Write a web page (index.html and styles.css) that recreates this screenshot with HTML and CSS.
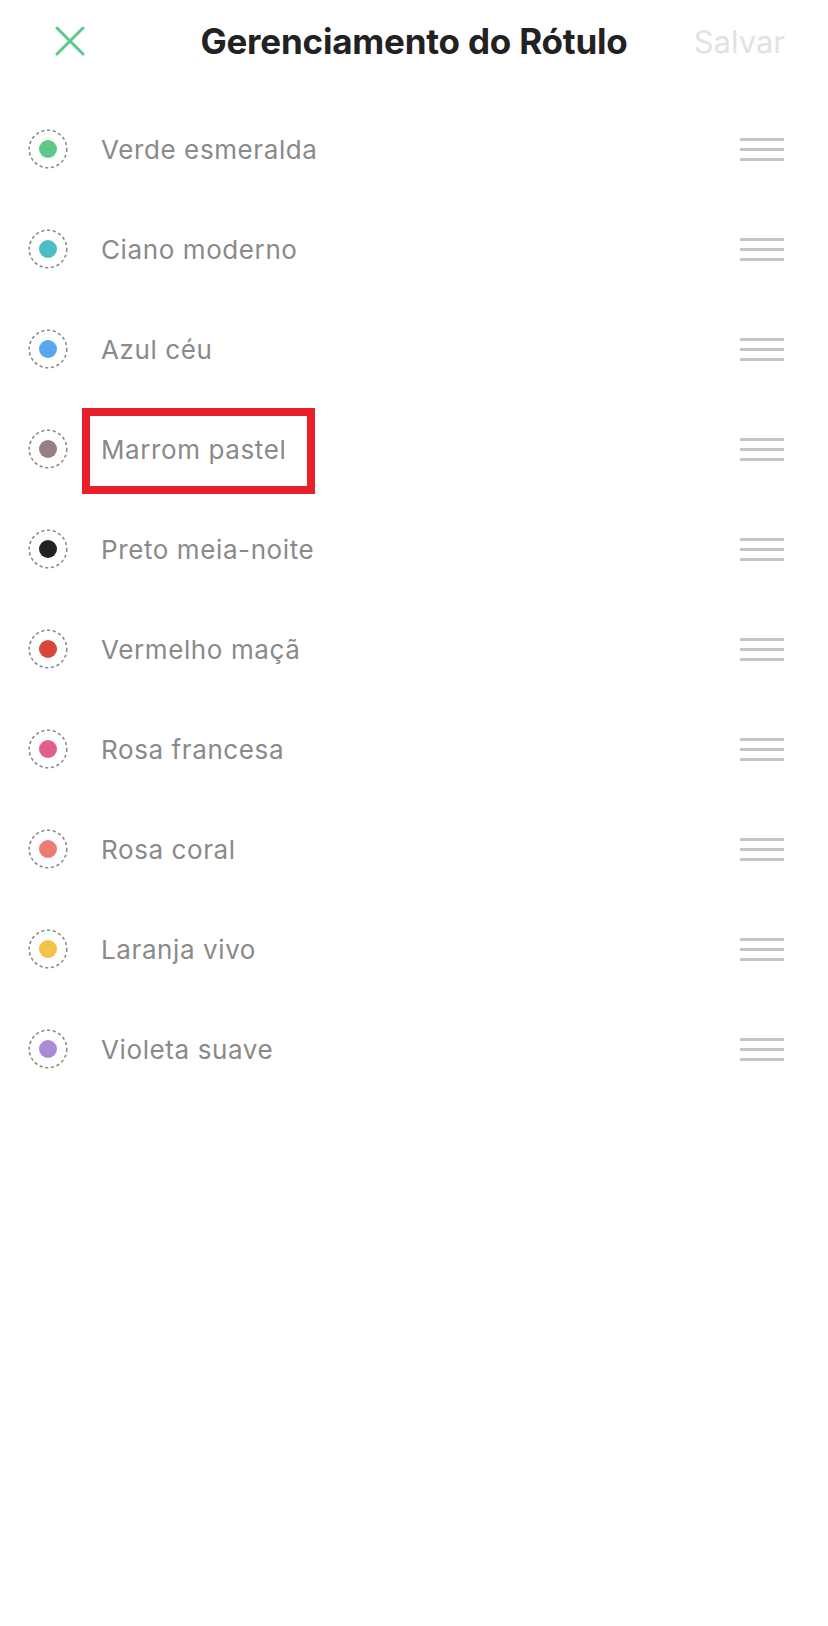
FILE: index.html
```html
<!DOCTYPE html>
<html lang="pt">
<head>
<meta charset="utf-8">
<title>Gerenciamento do Rótulo</title>
<link rel="stylesheet" href="styles.css">
</head>
<body>
<div class="screen">
  <header class="topbar">
    <div class="close">
      <svg width="30" height="30" viewBox="0 0 30 30"><path d="M2 2 L28 28 M28 2 L2 28" stroke="#5cc98a" stroke-width="3" stroke-linecap="round" fill="none"/></svg>
    </div>
    <h1 class="title">Gerenciamento do Rótulo</h1>
    <div class="save">Salvar</div>
  </header>
  <ul class="labels">
    <li class="row"><span class="swatch"><svg width="40" height="40" viewBox="0 0 40 40"><circle cx="20" cy="20" r="18.8" class="ring"/><circle cx="20" cy="20" r="9" fill="#5cc98a"/></svg></span><span class="name">Verde esmeralda</span><span class="grip"><i></i><i></i><i></i></span></li>
    <li class="row"><span class="swatch"><svg width="40" height="40" viewBox="0 0 40 40"><circle cx="20" cy="20" r="18.8" class="ring"/><circle cx="20" cy="20" r="9" fill="#4dbcc4"/></svg></span><span class="name">Ciano moderno</span><span class="grip"><i></i><i></i><i></i></span></li>
    <li class="row"><span class="swatch"><svg width="40" height="40" viewBox="0 0 40 40"><circle cx="20" cy="20" r="18.8" class="ring"/><circle cx="20" cy="20" r="9" fill="#58a6ef"/></svg></span><span class="name">Azul céu</span><span class="grip"><i></i><i></i><i></i></span></li>
    <li class="row"><span class="swatch"><svg width="40" height="40" viewBox="0 0 40 40"><circle cx="20" cy="20" r="18.8" class="ring"/><circle cx="20" cy="20" r="9" fill="#977f7f"/></svg></span><span class="name">Marrom pastel</span><span class="grip"><i></i><i></i><i></i></span><span class="highlight"></span></li>
    <li class="row"><span class="swatch"><svg width="40" height="40" viewBox="0 0 40 40"><circle cx="20" cy="20" r="18.8" class="ring"/><circle cx="20" cy="20" r="9" fill="#222222"/></svg></span><span class="name">Preto meia-noite</span><span class="grip"><i></i><i></i><i></i></span></li>
    <li class="row"><span class="swatch"><svg width="40" height="40" viewBox="0 0 40 40"><circle cx="20" cy="20" r="18.8" class="ring"/><circle cx="20" cy="20" r="9" fill="#d9443d"/></svg></span><span class="name">Vermelho maçã</span><span class="grip"><i></i><i></i><i></i></span></li>
    <li class="row"><span class="swatch"><svg width="40" height="40" viewBox="0 0 40 40"><circle cx="20" cy="20" r="18.8" class="ring"/><circle cx="20" cy="20" r="9" fill="#e05f8a"/></svg></span><span class="name">Rosa francesa</span><span class="grip"><i></i><i></i><i></i></span></li>
    <li class="row"><span class="swatch"><svg width="40" height="40" viewBox="0 0 40 40"><circle cx="20" cy="20" r="18.8" class="ring"/><circle cx="20" cy="20" r="9" fill="#ef7b72"/></svg></span><span class="name">Rosa coral</span><span class="grip"><i></i><i></i><i></i></span></li>
    <li class="row"><span class="swatch"><svg width="40" height="40" viewBox="0 0 40 40"><circle cx="20" cy="20" r="18.8" class="ring"/><circle cx="20" cy="20" r="9" fill="#f5c348"/></svg></span><span class="name">Laranja vivo</span><span class="grip"><i></i><i></i><i></i></span></li>
    <li class="row"><span class="swatch"><svg width="40" height="40" viewBox="0 0 40 40"><circle cx="20" cy="20" r="18.8" class="ring"/><circle cx="20" cy="20" r="9" fill="#a98bd8"/></svg></span><span class="name">Violeta suave</span><span class="grip"><i></i><i></i><i></i></span></li>
  </ul>
</div>
</body>
</html>
```
FILE: styles.css
```css
html, body {
  margin: 0;
  padding: 0;
  background: #ffffff;
}
body {
  font-family: Inter, "Noto Sans", "Liberation Sans", sans-serif;
  width: 828px;
  min-height: 1626px;
}
.screen {
  width: 828px;
}
.topbar {
  display: grid;
  grid-template-columns: 1fr auto 1fr;
  align-items: center;
  height: 82px;
}
.close {
  padding-left: 55px;
  display: flex;
  align-items: center;
}
.close svg {
  display: block;
}
.title {
  margin: 0;
  font-size: 35px;
  font-weight: 700;
  color: #222222;
  letter-spacing: -0.2px;
}
.save {
  justify-self: end;
  padding-right: 43px;
  font-size: 31px;
  font-weight: 400;
  color: #e2e2e2;
}
.labels {
  list-style: none;
  margin: 0;
  padding: 17px 0 0 0;
}
.row {
  position: relative;
  display: flex;
  align-items: center;
  height: 100px;
  padding: 0 44px 0 28px;
}
.swatch {
  width: 40px;
  height: 40px;
  flex: none;
}
.swatch svg {
  display: block;
}
.ring {
  fill: none;
  stroke: #8c8c8c;
  stroke-width: 1.6;
  stroke-dasharray: 3.2 2.6;
}
.name {
  margin-left: 33px;
  flex: 1;
  font-size: 26px;
  letter-spacing: 0.6px;
  color: #8a8a8a;
  font-weight: 400;
}
.grip {
  width: 44px;
  display: flex;
  flex-direction: column;
  gap: 7px;
}
.grip i {
  display: block;
  height: 3px;
  background: #c4c4c4;
}
.highlight {
  position: absolute;
  left: 82px;
  top: 9px;
  width: 233px;
  height: 86px;
  box-sizing: border-box;
  border: 8px solid #e8202a;
}
```
